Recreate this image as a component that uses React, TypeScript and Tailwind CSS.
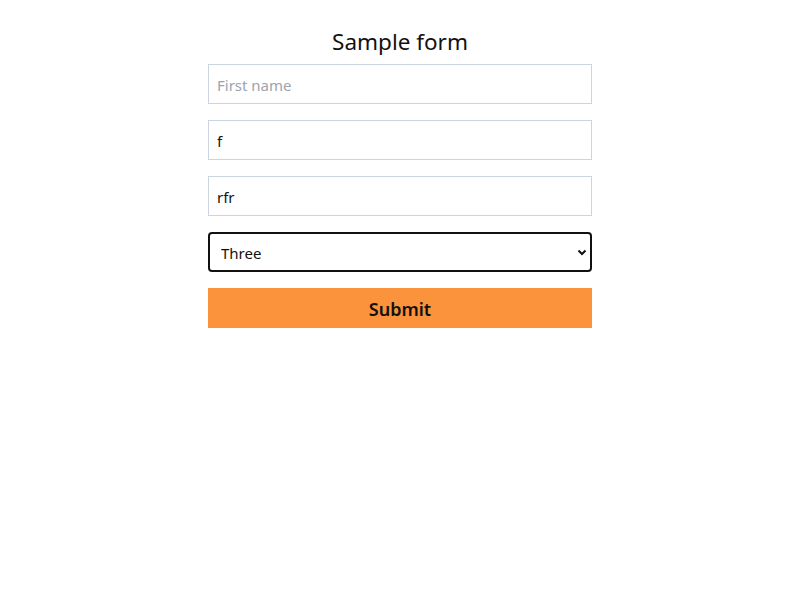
import React from "react";

const App = () => {
  return (
    <div className="min-h-screen bg-white font-['Noto_Sans',sans-serif] text-[#111]">
      <form className="mx-auto w-[384px] pt-[26px] flex flex-col">
        <h1 className="text-center text-[22.5px] leading-[32px] mb-[6px]">Sample form</h1>

        <div className="flex flex-col gap-4">
          <input
            type="text"
            placeholder="First name"
            className="h-10 w-full border border-[#cbd5e1] px-2 pt-[2px] text-[15px] placeholder-[#9ca3af] outline-none"
          />
          <input
            type="text"
            defaultValue="f"
            className="h-10 w-full border border-[#cbd5e1] px-2 pt-[2px] text-[15px] outline-none"
          />
          <input
            type="text"
            defaultValue="rfr"
            className="h-10 w-full border border-[#cbd5e1] px-2 pt-[2px] text-[15px] outline-none"
          />

          <div className="relative">
            <select
              defaultValue="three"
              className="h-10 w-full appearance-none rounded-[4px] border-2 border-[#111] bg-white pl-[11px] pr-8 pt-[2px] text-[15px] outline-none"
            >
              <option value="one">One</option>
              <option value="two">Two</option>
              <option value="three">Three</option>
            </select>
            <svg
              className="pointer-events-none absolute right-[5px] top-1/2 -translate-y-1/2"
              width="10"
              height="10"
              viewBox="0 0 10 10"
            >
              <path d="M1.5 3.5 L5 7 L8.5 3.5" fill="none" stroke="#111" strokeWidth="2" />
            </svg>
          </div>

          <button
            type="submit"
            className="h-10 w-full bg-[#fb923c] pt-[3px] text-[18px] font-semibold text-[#111]"
          >
            Submit
          </button>
        </div>
      </form>
    </div>
  );
};

export default App;
